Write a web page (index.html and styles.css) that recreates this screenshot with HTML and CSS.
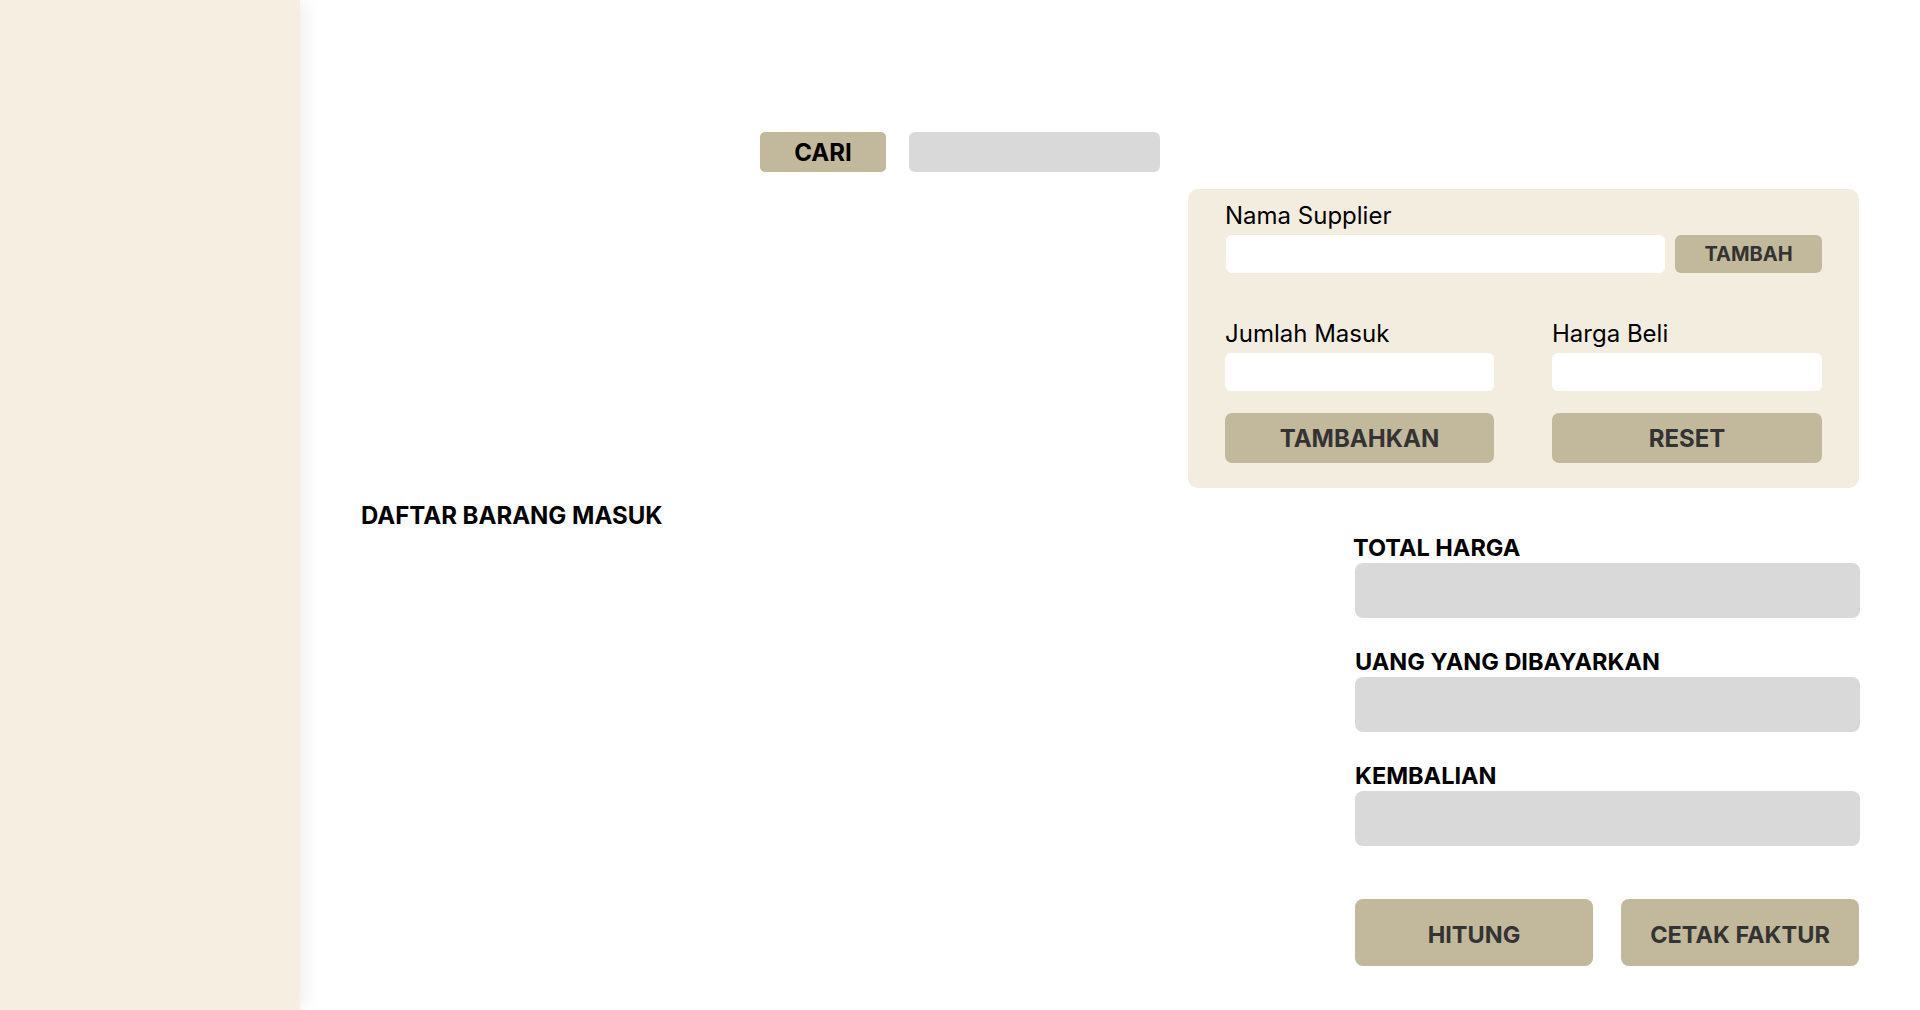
FILE: index.html
```html
<!DOCTYPE html>
<html lang="id">
<head>
<meta charset="utf-8">
<title>Barang Masuk</title>
<link rel="stylesheet" href="styles.css">
</head>
<body>
<div class="layout">
  <aside class="sidebar"></aside>
  <main class="main">
    <div class="search-row">
      <button class="btn-cari">CARI</button>
      <div class="search-input"></div>
    </div>
    <section class="panel">
      <div class="label">Nama Supplier</div>
      <div class="supplier-row">
        <div class="field field-supplier"></div>
        <button class="btn-tambah">TAMBAH</button>
      </div>
      <div class="cols">
        <div class="col">
          <div class="label">Jumlah Masuk</div>
          <div class="field"></div>
        </div>
        <div class="col">
          <div class="label">Harga Beli</div>
          <div class="field"></div>
        </div>
      </div>
      <div class="cols actions">
        <button class="btn-panel">TAMBAHKAN</button>
        <button class="btn-panel">RESET</button>
      </div>
    </section>
    <div class="lower">
      <h2 class="title">DAFTAR BARANG MASUK</h2>
      <div class="summary">
        <div class="sum-label first">TOTAL HARGA</div>
        <div class="sum-box"></div>
        <div class="sum-label">UANG YANG DIBAYARKAN</div>
        <div class="sum-box"></div>
        <div class="sum-label">KEMBALIAN</div>
        <div class="sum-box"></div>
        <div class="sum-actions">
          <button class="btn-big">HITUNG</button>
          <button class="btn-big">CETAK FAKTUR</button>
        </div>
      </div>
    </div>
  </main>
</div>
</body>
</html>
```
FILE: styles.css
```css
* { box-sizing: border-box; }
html, body { margin: 0; padding: 0; height: 100%; background: #ffffff; }
body { font-family: Inter, "Noto Sans", sans-serif; color: #000; overflow: hidden; }
button { font-family: inherit; border: 0; padding: 0; cursor: pointer; }

.layout { display: flex; height: 1010px; }
.sidebar {
  width: 300px; flex: 0 0 300px; height: 100%;
  background: #F5EEE1;
  box-shadow: 4px 0 18px rgba(0,0,0,0.07);
  position: relative; z-index: 1;
}
.main { flex: 1; }

.search-row { display: flex; gap: 23px; margin: 132px 0 0 460px; }
.btn-cari {
  width: 126px; height: 40px; background: #C2B89B; border-radius: 5px;
  font-size: 24px; font-weight: 700; color: #000; line-height: 38px; padding-top: 2px;
}
.search-input { width: 251px; height: 40px; background: #D9D9D9; border-radius: 6px; }

.panel {
  margin: 17px 0 0 888px; width: 671px; height: 299px;
  background: #F3EDE0; border-radius: 10px;
  padding: 13px 37px 0 37px;
}
.label { font-size: 24px; line-height: 28px; height: 28px; white-space: nowrap; color: #000; }
.supplier-row { display: flex; gap: 10px; margin: 5px 0 0 1px; }
.field { height: 38px; background: #fff; border-radius: 6px; }
.field-supplier { width: 439px; }
.btn-tambah {
  width: 147px; height: 38px; background: #C2B89B; border-radius: 6px;
  color: #333; font-weight: 700; font-size: 20px; white-space: nowrap;
}
.cols { display: grid; grid-template-columns: 269px 270px; column-gap: 58px; margin-top: 47px; }
.col .field { margin-top: 5px; }
.actions { margin-top: 22px; }
.btn-panel {
  height: 50px; background: #C2B89B; border-radius: 7px;
  color: #333; font-weight: 700; font-size: 24px; white-space: nowrap;
}

.lower { display: flex; margin-top: 14px; }
.title { margin: 0 0 0 61px; font-size: 24px; font-weight: 700; line-height: 28px; }
.summary { margin: 32px 60px 0 auto; width: 505px; }
.sum-label { font-size: 23.5px; font-weight: 700; line-height: 28px; margin-top: 30px; }
.sum-label.first { margin-top: 0; margin-left: -2px; }
.sum-box { height: 55px; background: #D9D9D9; border-radius: 8px; margin-top: 1px; }
.sum-actions { display: grid; grid-template-columns: 238px 238px; column-gap: 28px; margin-top: 53px; }
.btn-big {
  height: 67px; background: #C2B89B; border-radius: 8px; padding-top: 4px;
  color: #333; font-weight: 700; font-size: 23.5px;
}
```
